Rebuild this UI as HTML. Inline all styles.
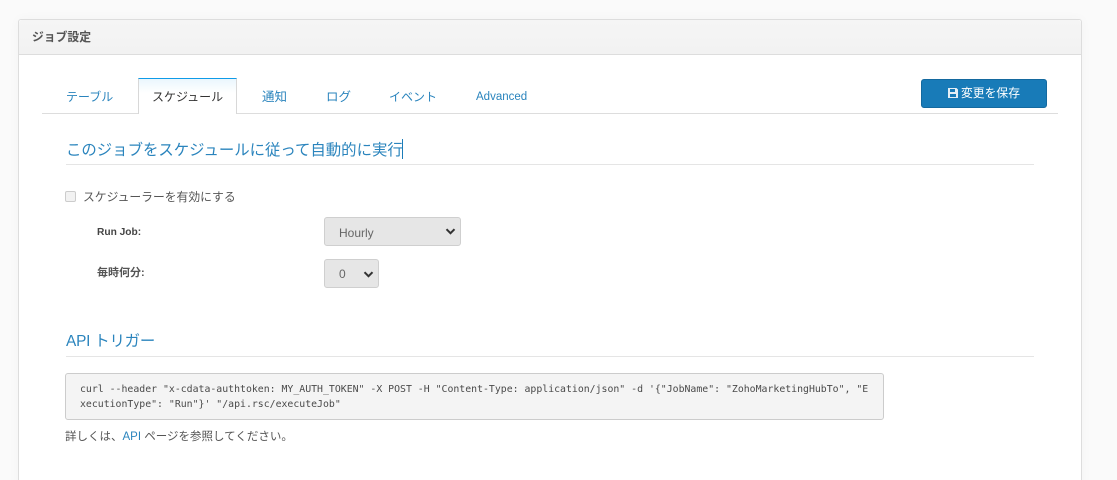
<!DOCTYPE html>
<html lang="ja">
<head>
<meta charset="utf-8">
<title>ジョブ設定</title>
<style>
html,body{margin:0;padding:0;width:1117px;height:480px;overflow:hidden;}
body{position:relative;background:#fafafa;font-family:"Liberation Sans","Noto Sans CJK JP",sans-serif;font-size:12px;color:#555;}
#wrap{position:absolute;left:0;top:0;width:1117px;height:480px;overflow:hidden;}
.a{position:absolute;white-space:nowrap;line-height:16px;}
#panel{position:absolute;left:18px;top:19px;width:1062px;height:480px;background:#fff;border:1px solid #ddd;border-radius:3px 3px 0 0;box-shadow:0 0 12px rgba(0,0,0,.03);}
#head{position:absolute;left:19px;top:20px;width:1062px;height:34px;background:linear-gradient(#f5f5f5,#f2f2f2);border-bottom:1px solid #ddd;border-radius:3px 3px 0 0;}
.line{position:absolute;height:1px;background:#e5e5e5;}
.tab{color:#2a84bd;font-size:12.5px;}
#active{position:absolute;left:138px;top:78px;width:99px;height:36px;box-sizing:border-box;background:linear-gradient(#eaf6fd,#fff 14px);border:1px solid #d8d8d8;border-top:1px solid #0f9be8;border-bottom:0;}
#btn{position:absolute;left:921px;top:79px;width:126px;height:29px;box-sizing:border-box;background:#187bb8;border:1px solid #14699f;border-radius:3px;color:#fff;font-size:11.8px;line-height:27px;}
.sel{position:absolute;box-sizing:border-box;background:#e6e6e6;border:1px solid #cfcfcf;border-radius:3px;color:#666;font-size:12px;}
#pre{position:absolute;left:65px;top:373px;width:819px;height:47px;box-sizing:border-box;background:#f4f4f4;border:1px solid #ccc;border-radius:3px;}
.mono{position:absolute;left:80px;font-family:"DejaVu Sans Mono","Liberation Mono",monospace;font-size:9.85px;line-height:15px;color:#4a4a4a;white-space:pre;}
</style>
</head>
<body>
<div id="wrap">
<div id="panel"></div>
<div id="head"></div>
<div class="a" style="left:32px;top:29px;font-size:11.8px;font-weight:bold;color:#555;">ジョブ設定</div>

<div class="line" style="left:42px;top:113px;width:1016px;background:#ddd;"></div>
<div id="active"></div>
<div class="a tab" style="left:66px;top:89px;font-size:12px;">テーブル</div>
<div class="a" style="left:152px;top:89px;font-size:12px;color:#333;">スケジュール</div>
<div class="a tab" style="left:262px;top:89px;">通知</div>
<div class="a tab" style="left:326px;top:89px;">ログ</div>
<div class="a tab" style="left:389px;top:89px;font-size:12px;">イベント</div>
<div class="a tab" style="left:476px;top:89px;font-size:11.5px;">Advanced</div>

<div id="btn">
<svg style="position:absolute;left:25px;top:7px;" width="12" height="12" viewBox="0 0 12 12"><path fill="#e4eef5" fill-rule="evenodd" d="M1 1h8.500L11 2.500V11H1zM3 2v3h5V2zM3 7v3h6V7z"/></svg>
<span style="position:absolute;left:39px;top:0;white-space:nowrap;">変更を保存</span>
</div>

<div class="a" style="left:66px;top:141px;font-size:15.4px;line-height:20px;color:#2a84bd;">このジョブをスケジュールに従って自動的に実行</div>
<div style="position:absolute;left:402px;top:139px;width:1px;height:20px;background:#1c7cb8;"></div>
<div class="line" style="left:66px;top:164px;width:968px;"></div>

<div style="position:absolute;left:65px;top:191px;width:11px;height:11px;box-sizing:border-box;background:#f2f2f2;border:1px solid #ccc;border-radius:2px;"></div>
<div class="a" style="left:83px;top:189px;font-size:11.8px;color:#555;">スケジューラーを有効にする</div>

<div class="a" style="left:97px;top:225px;font-size:10.2px;font-weight:bold;color:#444;">Run Job:</div>
<div class="sel" style="left:324px;top:217px;width:137px;height:29px;">
<span style="position:absolute;left:14px;top:7px;line-height:16px;">Hourly</span>
<svg style="position:absolute;left:120px;top:10px;" width="11" height="7" viewBox="0 0 11 7"><path d="M1.500 1.200L5.500 5.200L9.500 1.200" fill="none" stroke="#333" stroke-width="2"/></svg>
</div>

<div class="a" style="left:97px;top:265px;font-size:11px;font-weight:bold;color:#555;">毎時何分:</div>
<div class="sel" style="left:324px;top:259px;width:55px;height:29px;">
<span style="position:absolute;left:14px;top:6px;line-height:16px;">0</span>
<svg style="position:absolute;left:38px;top:11px;" width="11" height="7" viewBox="0 0 11 7"><path d="M1.500 1.200L5.500 5.200L9.500 1.200" fill="none" stroke="#333" stroke-width="2"/></svg>
</div>

<div class="a" style="left:66px;top:332px;font-size:15.4px;letter-spacing:-.2px;line-height:20px;color:#2a84bd;">API トリガー</div>
<div class="line" style="left:66px;top:356px;width:968px;"></div>

<div id="pre"></div>
<div class="mono" style="top:382px;">curl --header "x-cdata-authtoken: MY_AUTH_TOKEN" -X POST -H "Content-Type: application/json" -d '{"JobName": "ZohoMarketingHubTo", "E</div>
<div class="mono" style="top:397px;">xecutionType": "Run"}' "/api.rsc/executeJob"</div>

<div class="a" style="left:65px;top:429px;font-size:11.5px;color:#555;">詳しくは、<span style="color:#2a84bd;">API</span> ページを参照してください。</div>
</div>
</body>
</html>
